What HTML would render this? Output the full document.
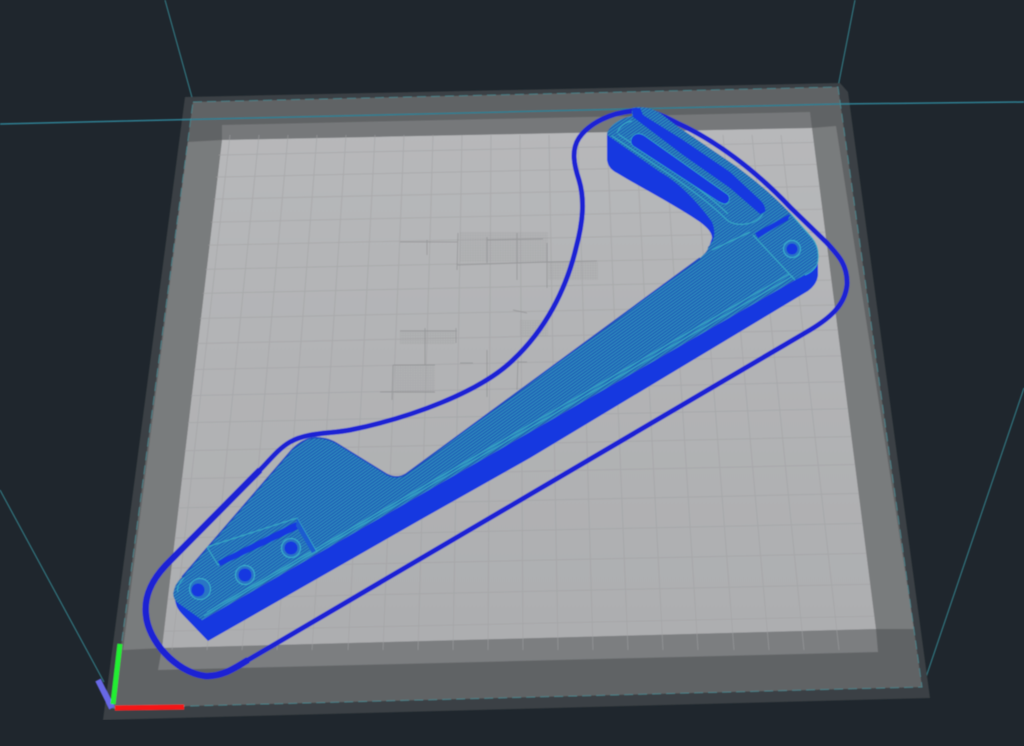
<!DOCTYPE html>
<html>
<head>
<meta charset="utf-8">
<title>3D print preview</title>
<style>
html,body{margin:0;padding:0;background:#1f262d;width:1024px;height:746px;overflow:hidden}
svg{display:block}
</style>
</head>
<body>
<svg width="1024" height="746" viewBox="0 0 1024 746" xmlns="http://www.w3.org/2000/svg">
<defs>
<pattern id="h" width="2.600" height="2.600" patternUnits="userSpaceOnUse" patternTransform="rotate(-35)">
<rect width="2.600" height="2.600" fill="#2f8cbe"/>
<rect width="2.600" height="1.200" fill="#1c55b4"/>
</pattern>
<pattern id="d" width="2.500" height="2.500" patternUnits="userSpaceOnUse">
<rect width="2.500" height="2.500" fill="#aeafb1"/>
<rect width="1" height="2.500" fill="#9d9ea0"/>
<rect width="2.500" height="1" fill="#9d9ea0"/>
</pattern>
<clipPath id="lt"><polygon points="222,125 810,112 812,128 876,629 878,652 158,670 162,648"/></clipPath>
<linearGradient id="g" x1="0" y1="0" x2="0" y2="1">
<stop offset="0" stop-color="#b7b8ba"/><stop offset="1" stop-color="#adaeb0"/>
</linearGradient>
<filter id="soft" x="0" y="0" width="100%" height="100%"><feGaussianBlur stdDeviation="0.45"/></filter>
</defs>
<rect width="1024" height="746" fill="#1f262d"/>
<g filter="url(#soft)">
<g stroke="#35848f" stroke-width="1.200" fill="none" opacity=".85">
<path d="M165 0L193 101"/><path d="M855 0L838 87"/><path d="M0 490L104 682"/><path d="M1024 388L923 686"/>
</g>
<polygon points="185,97 840,83 848,92 930,698 103,720" fill="#3b4144"/>
<polygon points="193,102 838,87 922,687 113,708" fill="#616365"/>
<polygon points="188,142 222,140 162,648 123,650" fill="#797b7d"/>
<polygon points="812,128 836,126 914,629 876,629" fill="#797b7d"/>
<polygon points="222,125 810,112 812,128 222,140" fill="#76787a"/>
<polygon points="162,648 876,629 878,652 158,670" fill="#7c7e80"/>
<polygon points="222,140 812,128 876,629 162,648" fill="url(#g)"/>
<g clip-path="url(#lt)" stroke="#a0a1a3" stroke-width="1" fill="none" opacity=".55">
<path d="M230 135L172 650M259 135L207 650M288 135L242 650M317 135L277 650M346 135L312 650M375 135L348 650M404 135L383 650M433 135L418 650M462 135L453 650M491 135L488 650M520 135L523 650M549 135L558 650M578 135L593 650M607 135L628 650M636 135L663 650M665 135L698 650M694 135L734 650M723 135L769 650M752 135L804 650M781 135L839 650"/>
<path d="M150 156.500L880 141M150 178.500L880 163M150 200.500L880 185M150 223.500L880 208M150 246.500L880 231M150 270.500L880 255M150 294.500L880 279M150 319.500L880 304M150 344.500L880 329M150 370.500L880 355M150 396.500L880 381M150 423.500L880 408M150 451.500L880 436M150 479.500L880 464M150 508.500L880 493M150 538.500L880 523M150 568.500L880 553M150 599.500L880 584M150 631.500L880 616"/>
</g>
<g opacity=".3">
<rect x="460" y="232" width="88" height="30" fill="url(#d)"/>
<rect x="548" y="262" width="50" height="18" fill="url(#d)"/>
<rect x="395" y="365" width="40" height="28" fill="url(#d)"/>
<rect x="400" y="330" width="55" height="14" fill="url(#d)"/>
<rect x="520" y="320" width="28" height="16" fill="url(#d)"/>
</g>
<g stroke="#8b8c8e" stroke-width="1" fill="none" opacity=".6">
<path d="M400 242L458 242M487 240L543 239M457 265L547 262L597 261M487 237L487 263M517 233L517 280M547 243L547 288M458 233L457 270M427 240L427 255"/>
<path d="M393 365L435 365M380 392L435 392M425 328L425 365M393 365L392 400M487 350L487 397M518 360L517 390M400 331L457 331M456 328L456 343M460 363L473 363M517 362L527 362M513 310L527 313"/>
</g>
<path d="M0 124L838 104L1024 102" stroke="#2f7f92" stroke-width="1.500" fill="none"/>
<polygon points="193,102 838,87 922,687 113,708" fill="none" stroke="#4a8f98" stroke-width="1" stroke-dasharray="9 5" opacity=".75"/>
<!-- brim -->
<path d="M632 111C612 113 590 122 579 138C571 150 574 165 579 180C585 200 583 222 576 248C566 290 545 330 513 360C480 392 410 418 350 430C330 434 308 432 290 442C278 449 270 460 260 470L166 565C150 582 144 598 146 615C148 640 175 672 205 676C222 677 235 668 248 660L810 330C830 318 845 305 847 285C848 265 838 255 827 243L790 207C755 170 715 140 677 123C660 114 645 108 632 111Z" fill="none" stroke="#1a20d4" stroke-width="5"/>
<path d="M260 470L166 565C150 582 144 598 146 615C148 640 175 672 205 676C222 677 235 668 248 660" fill="none" stroke="#1a20d4" stroke-width="6.500"/>
<!-- walls -->
<path d="M607 133L607 160C608 166 611 170 617 173C640 187 670 202 700 222C708 228 712 233 712 238L708 250L740 250L720 205L650 140Z" fill="#1238e0"/>
<path d="M174 590L175 600C176 606 178 610 183 615L208 641L420 520L530 458L808 291C813 287 817 283 818 275L818 258L795 280L202 620Z" fill="#1238e0"/>
<!-- top surface -->
<path d="M607 133C610 125 620 118 632 116L632 108C640 106 650 107 660 113L677 126L727 160C745 172 770 192 790 213L812 238C817 244 819 251 818 260C818 266 812 272 805 275L795 280L202 620L178 603C174 600 172 595 174 590C175 585 178 581 182 577L290 452C296 445 303 440 312 438C320 437 329 439 336 443L383 472C390 477 398 479 406 474L603 330L700 258C704 254 708 251 708 247C715 240 716 232 712 222C700 205 680 183 660 172L610 137C608 136 607 135 607 133Z" fill="url(#h)"/>
<g fill="none" stroke="#38abc6" stroke-width="1">
<path d="M612 136L660 168C690 188 712 205 727 220C735 227 755 226 763 214"/>
<path d="M618 134L660 162C690 182 712 198 728 214"/>
<path d="M204 616L793 276M207 612L789 274"/>
<path d="M178 592C176 588 180 582 184 578M712 250L750 232M795 280L753 235"/>
<path d="M617 133C620 126 625 122 632 121"/>
<path d="M790 213L812 238C817 244 819 251 818 260C818 266 812 272 805 275"/>
</g>
<path d="M182 577L290 452C296 445 303 440 312 438C320 437 329 439 336 443L383 472C390 477 398 479 406 474L700 258" fill="none" stroke="#1f4cc4" stroke-width="1.500"/>
<!-- head details -->
<path d="M643 115L683 140L730 172L760 200C764 204 766 208 765 212L760 214L730 188L683 155L633 117L632 108L640 108Z" fill="#1238e0"/>
<path d="M636 134C639 133 642 134 645 136L727 194C731 197 730 203 725 204C723 204 721 203 719 202L633 146C629 142 631 136 636 134Z" fill="#1238e0" stroke="#38abc6" stroke-width=".7"/>
<path d="M755 233L790 214L788 220L758 238Z" fill="#1238e0"/>
<circle cx="792" cy="249" r="8.500" fill="#2a74c4" stroke="#3ab2cc" stroke-width="1"/>
<circle cx="792" cy="249" r="5.500" fill="#1238e0"/>
<!-- foot details -->
<path d="M207 547L218 565L298 525L317 552M207 547L297 518L317 552" fill="none" stroke="#38abc6" stroke-width="1"/>
<path d="M218 561L296 522L300 528L220 566Z" fill="#1238e0"/>
<path d="M297 518L316 551L312 553L296 526Z" fill="#1f5cd0"/>
<g fill="#2a74c4" stroke="#3ab2cc" stroke-width="1">
<circle cx="200" cy="589" r="10.500"/><circle cx="245" cy="575" r="9.500"/><circle cx="291" cy="548" r="9.500"/>
</g>
<g fill="#1238e0">
<circle cx="198" cy="590" r="6.500"/><circle cx="245" cy="575" r="6.500"/><circle cx="291" cy="548" r="6.500"/>
</g>
<!-- axes -->
<path d="M112 708L98 680" stroke="#6767e6" stroke-width="6"/>
<path d="M113 704L120 644" stroke="#22ee33" stroke-width="5"/>
<path d="M115 708L184 707" stroke="#f41414" stroke-width="5"/>
</g>
</svg>
</body>
</html>
